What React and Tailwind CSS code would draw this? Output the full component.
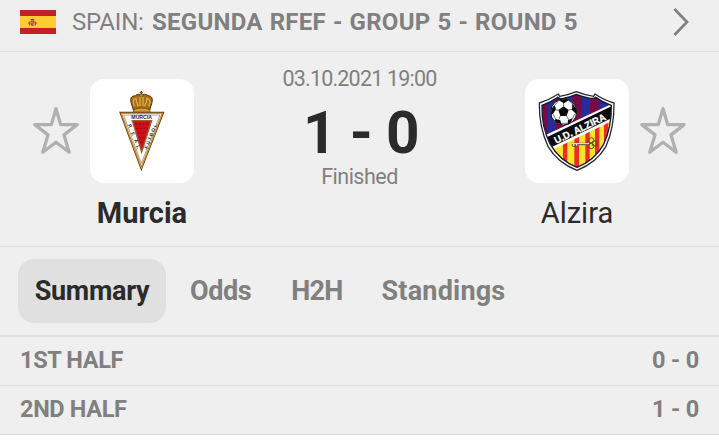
import clsx from 'clsx'

const TABS = [
  { label: 'Summary', className: 'w-[148px] tracking-[-0.3px]', active: true },
  { label: 'Odds', className: 'ml-6 tracking-[-0.4px]' },
  { label: 'H2H', className: 'ml-10 tracking-[-0.8px]' },
  { label: 'Standings', className: 'ml-[39px] tracking-[0.2px]' }
]

const PERIODS = [
  { label: '1ST HALF', score: '0 - 0' },
  { label: '2ND HALF', score: '1 - 0' }
]

function SpainFlag() {
  return (
    <svg className="h-6 w-9 shrink-0" viewBox="0 0 36 24">
      <path fill="#c42127" d="M0 0h36v24H0z" />
      <path fill="#ffcc33" d="M0 6h36v12H0z" />
      <path fill="#b5502b" d="M9 11.5h1v4H9zM15 11.5h1v4h-1zM10.5 11h4v3.2q0 1.8-2 1.8t-2-1.8z" />
      <path fill="#8f3a32" d="M10.4 9.3q2.1-1 4.2 0l-.5 1.3h-3.2zM8 12.6h1.4v.9H8zM15.6 12.6H17v.9h-1.4z" />
      <path fill="#dda59a" d="M11.4 12h1.1v1.3h-1.1zM12.8 13.5h1v1.2h-1z" />
    </svg>
  )
}

function Star() {
  return (
    <svg className="h-[52px] w-[50px] shrink-0" viewBox="0 0 50 52" fill="none" stroke="#b0b0b0" strokeWidth="3.3" strokeLinejoin="round">
      <path d="M25 3.6 29.7 19.6H46.2L33 29.9 38.2 47.3 25 37.2 11.8 47.3 17 29.9 3.8 19.6H20.3Z" />
    </svg>
  )
}

function MurciaCrest() {
  return (
    <svg className="h-full w-full" viewBox="15 12 312 312">
      <path d="M145 105 138 82Q133 63 151 62Q161 53 169 63Q178 53 189 62Q206 63 201 83L194 105Q169 99 145 105Z" fill="#a66d1c" stroke="#4c3215" strokeWidth="3" />
      <path d="M148 94Q140 72 153 70Q153 81 160 94M165 93V67h9v26M179 94Q186 81 186 70Q201 73 191 94" fill="none" stroke="#e2ae43" strokeWidth="4" />
      <path d="M145 104Q170 94 195 104V112H145Z" fill="#d49b37" stroke="#5b3a13" strokeWidth="2" />
      <path d="M169 48v13M164 53h10" stroke="#76501e" strokeWidth="4" />
      <circle cx="169" cy="62" r="5" fill="#c88d2e" stroke="#54340f" strokeWidth="1.5" />
      <path d="M106 113H235L169 282Z" fill="#fff" stroke="#654017" strokeWidth="5" />
      <path d="M109 115H232L169 277Z" fill="none" stroke="#c8923d" strokeWidth="4" />
      <path d="M116 120H225L169 265Z" fill="#fff" stroke="#6b4a20" strokeWidth="1.5" />
      <path d="M142 137H200L170 232Z" fill="#cf101b" stroke="#9b6528" strokeWidth="4" />
      <path d="M150 147h41M153 160h35M158 174h24M161 188h18M165 202h10" stroke="#861018" strokeWidth="3" strokeDasharray="7 4" />
      <g fill="#182638" fontFamily="Liberation Sans, sans-serif" fontWeight="700">
        <text x="139" y="133" fontSize="14" textLength="62" lengthAdjust="spacingAndGlyphs">MURCIA</text>
        <g fontSize="14">
          <text transform="translate(129 150) rotate(65)">R</text>
          <text transform="translate(138 174) rotate(65)">E</text>
          <text transform="translate(147 196) rotate(65)">A</text>
          <text transform="translate(153 214) rotate(65)">L</text>
        </g>
        <text transform="translate(187 222) rotate(-68)" fontSize="14" textLength="78">FÚTBOL</text>
      </g>
    </svg>
  )
}

function AlziraCrest() {
  const shield = 'M58 84Q87 75 115 57L119 64Q146 60 169 50Q193 60 221 64L225 57Q251 75 282 84Q283 158 258 214Q230 263 171 286Q112 263 84 214Q57 156 58 84Z'
  const field = 'M66 91Q92 82 113 67Q119 73 130 70Q151 66 169 58Q190 66 211 70Q222 72 227 67Q248 82 274 91Q275 157 251 208Q224 256 171 277Q118 256 91 208Q64 156 66 91Z'
  return (
    <svg className="h-full w-full" viewBox="15 12 312 312">
      <defs>
        <clipPath id="alzira-field">
          <path d={field} />
        </clipPath>
      </defs>
      <path d={shield} fill="#fff" stroke="#282a32" strokeWidth="4" strokeLinejoin="round" />
      <g clipPath="url(#alzira-field)">
        <path fill="#780b46" d="M60 50h220v240H60z" />
        <path fill="#252c9b" d="M82 50h24v160H82zM136 50h22v160h-22zM186 50h24v160h-24zM239 50h22v160h-22z" />
        <path fill="#ffe32e" d="M60 235 285 120V300H60Z" />
        <path fill="#ed2c24" d="M129 190h13v90h-13zM163 175h14v110h-14zM196 160h13v120h-13zM225 145h13v120h-13zM252 130h13v100h-13z" />
        <path fill="#fff" d="M60 188 285 82V134L60 242Z" />
        <path fill="#080a0c" d="M60 196 285 89V125L60 233Z" />
      </g>
      <path d={field} fill="none" stroke="#1b1b33" strokeWidth="4" />
      <circle cx="131" cy="111" r="39" fill="#fff" stroke="#111" strokeWidth="3" />
      <path d="M131 94 146 105 140 123H121L115 105ZM116 76Q131 69 146 76L132 85ZM94 101 104 90 108 102 99 117 93 119ZM157 85 169 102 168 116 156 105ZM107 132 121 136 124 148Q111 146 103 137ZM144 136 158 129Q156 143 142 149Z" fill="#0b0b0b" />
      <path d="M131 94V84M146 105 156 103M140 123 147 135M121 123 116 134M115 105H106M116 76 105 90M146 76 158 87M100 118 107 133M165 116 157 131M123 145H142" stroke="#222" strokeWidth="2" fill="none" />
      <text transform="translate(109 207) rotate(-26)" fill="#fff" stroke="#fff" strokeWidth="0.8" fontFamily="Liberation Sans, sans-serif" fontSize="30" fontWeight="700" textLength="168" lengthAdjust="spacingAndGlyphs">U.D. ALZIRA</text>
      <g fill="none" stroke="#4d4934">
        <path d="M155 207H208M161 207v8M170 207v7" strokeWidth="8" />
        <path d="M155 206H207M161 207v6M170 207v5" stroke="#e7dfbf" strokeWidth="4" />
        <circle cx="214" cy="196" r="8" strokeWidth="3" />
        <circle cx="214" cy="213" r="8" strokeWidth="3" />
        <circle cx="224" cy="205" r="8" strokeWidth="3" />
      </g>
    </svg>
  )
}

function Team({ name, crest, className }) {
  return (
    <div className="flex w-[104px] flex-col items-center">
      <div className="h-[104px] w-[104px] overflow-hidden rounded-[14px] bg-white">{crest}</div>
      <p className={clsx('mt-[11px] text-[29px] leading-[38px] whitespace-nowrap text-[#2b2b2b]', className)}>{name}</p>
    </div>
  )
}

export default function App() {
  return (
    <div className="h-[447px] w-[719px] overflow-hidden bg-white font-['Roboto',sans-serif] text-[#808080]">
      <div className="bg-[#efefef]">
        <header className="flex h-[52px] items-center border-b border-[#dcdcdc] pb-[7px] pl-5 text-[24px] leading-6 whitespace-nowrap">
          <SpainFlag />
          <span className="ml-4 w-20 tracking-[-0.2px]">SPAIN:</span>
          <span className="font-bold tracking-[0.27px] [word-spacing:0.7px]">SEGUNDA RFEF - GROUP 5 - ROUND 5</span>
          <svg className="mr-[29px] ml-auto h-[30px] w-[18px] shrink-0" viewBox="0 0 18 30" fill="none" stroke="#808080" strokeWidth="2.7">
            <path d="M2.4 2 15 15 2.4 28" />
          </svg>
        </header>

        <section className="flex h-[195px] border-b border-[#dcdcdc] pt-[27px]">
          <div className="mt-[26px] ml-[31px] w-[59px]"><Star /></div>
          <Team name="Murcia" crest={<MurciaCrest />} className="font-bold" />
          <div className="flex w-[331px] flex-col items-center whitespace-nowrap">
            <p className="-mt-3 h-6 text-[21.5px] leading-6 tracking-[-0.8px]">03.10.2021 19:00</p>
            <p className="mt-[13px] pl-[3px] text-[58.5px] leading-[58px] font-bold tracking-[-0.7px] text-[#2b2b2b]">1 - 0</p>
            <p className="mt-[3px] text-[21.5px] leading-6 tracking-[-0.5px]">Finished</p>
          </div>
          <Team name="Alzira" crest={<AlziraCrest />} />
          <div className="mt-[26px] ml-[9px]"><Star /></div>
        </section>

        <nav className="flex h-[90px] border-b-2 border-[#e0e0e0] pt-3 pl-[18px] text-[27px] font-bold">
          {TABS.map(tab => (
            <button
              key={tab.label}
              className={clsx('h-16 rounded-[16px] text-center', tab.className, tab.active && 'bg-[#e0e0e0] text-[#2b2b2b]')}
            >
              {tab.label}
            </button>
          ))}
        </nav>

        {PERIODS.map(period => (
          <div key={period.label} className="flex h-[49px] items-center justify-between border-b border-[#dcdcdc] pr-5 pb-px pl-5 text-[23.5px] font-bold">
            <span className="tracking-[-0.35px]">{period.label}</span>
            <span className="tracking-[-0.2px]">{period.score}</span>
          </div>
        ))}
      </div>
    </div>
  )
}
